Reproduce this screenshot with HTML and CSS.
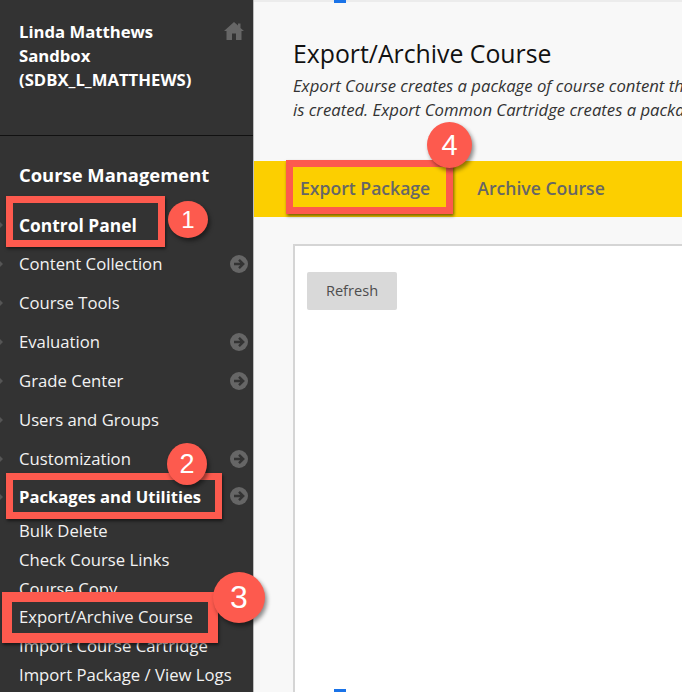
FILE: index.html
```html
<!DOCTYPE html>
<html lang="en">
<head>
<meta charset="utf-8">
<title>Export/Archive Course</title>
<link rel="stylesheet" href="styles.css">
</head>
<body>
<div class="app">
  <aside class="sidebar">
    <header class="course-head">
      <a class="course-name">Linda Matthews Sandbox (SDBX_L_MATTHEWS)</a>
      <svg class="home" viewBox="0 0 20 18" aria-hidden="true"><path d="M10 0 L14 3.6 V1.5 H16.5 V5.9 L20 9 H17.5 V18 H12 V11.5 H8 V18 H2.5 V9 H0 Z"/></svg>
    </header>
    <h2 class="section-title">Course Management</h2>
    <div class="panel-title caret">Control Panel</div>
    <ul class="nav">
      <li class="nav-row caret">Content Collection<svg class="go" viewBox="0 0 18 18" aria-hidden="true"><circle cx="9" cy="9" r="9"/><path d="M4 9 H12 M9 4.8 L13.2 9 L9 13.2"/></svg></li>
      <li class="nav-row caret">Course Tools</li>
      <li class="nav-row caret">Evaluation<svg class="go" viewBox="0 0 18 18" aria-hidden="true"><circle cx="9" cy="9" r="9"/><path d="M4 9 H12 M9 4.8 L13.2 9 L9 13.2"/></svg></li>
      <li class="nav-row caret">Grade Center<svg class="go" viewBox="0 0 18 18" aria-hidden="true"><circle cx="9" cy="9" r="9"/><path d="M4 9 H12 M9 4.8 L13.2 9 L9 13.2"/></svg></li>
      <li class="nav-row caret">Users and Groups</li>
      <li class="nav-row caret">Customization<svg class="go" viewBox="0 0 18 18" aria-hidden="true"><circle cx="9" cy="9" r="9"/><path d="M4 9 H12 M9 4.8 L13.2 9 L9 13.2"/></svg></li>
      <li class="nav-row nav-open caret">Packages and Utilities<svg class="go" viewBox="0 0 18 18" aria-hidden="true"><circle cx="9" cy="9" r="9"/><path d="M4 9 H12 M9 4.8 L13.2 9 L9 13.2"/></svg></li>
    </ul>
    <ul class="subnav">
      <li>Bulk Delete</li>
      <li>Check Course Links</li>
      <li>Course Copy</li>
      <li>Export/Archive Course</li>
      <li>Import Course Cartridge</li>
      <li>Import Package / View Logs</li>
    </ul>
  </aside>
  <main class="content">
    <div class="top-strip"><span class="marker"></span></div>
    <section class="page-head">
      <h1 class="page-title">Export/Archive Course</h1>
      <p class="page-desc"><span class="desc-line">Export Course creates a package of course content that</span><span class="desc-line">is created. Export Common Cartridge creates a package</span></p>
    </section>
    <nav class="action-bar">
      <a class="action">Export Package</a>
      <a class="action">Archive Course</a>
    </nav>
    <div class="box">
      <button class="refresh" type="button">Refresh</button>
    </div>
    <span class="marker marker-bottom"></span>
  </main>
  <div class="callout-box box-1"></div>
  <div class="callout-box box-2"></div>
  <div class="callout-box box-3"></div>
  <div class="callout-box box-4"></div>
  <div class="badge badge-1">1</div>
  <div class="badge badge-2">2</div>
  <div class="badge badge-3">3</div>
  <div class="badge badge-4">4</div>
</div>
</body>
</html>
```
FILE: styles.css
```css
* { box-sizing: border-box; }
html, body { margin: 0; padding: 0; background: #fff; }
.app {
  position: relative;
  width: 682px;
  height: 692px;
  overflow: hidden;
  display: flex;
  font-family: "Open Sans", "Liberation Sans", sans-serif;
}

/* Sidebar */
.sidebar {
  flex: 0 0 254px;
  height: 692px;
  background: #333;
  border-right: 1px solid #bdbdbd;
  color: #f2f2f2;
  overflow: hidden;
}
.course-head {
  height: 136px;
  padding: 20px 0 0 19px;
  border-bottom: 1px solid #111;
  display: flex;
  align-items: flex-start;
  position: relative;
}
.course-name {
  width: 185px;
  font-size: 16.7px;
  font-weight: 700;
  line-height: 24px;
  color: #fff;
}
.home { width: 20px; height: 18px; margin: 2px 0 0 20px; fill: #666; }
.section-title {
  margin: 26px 0 0;
  padding-left: 19px;
  font-size: 18.4px;
  line-height: 26px;
  font-weight: 700;
  color: #fff;
}
.panel-title {
  margin-top: 24px;
  padding-left: 19px;
  font-size: 17.4px;
  line-height: 26px;
  font-weight: 700;
  color: #fff;
}
.nav, .subnav { list-style: none; margin: 0; padding: 0; }
.nav { margin-top: 6px; }
.nav-row {
  height: 39px;
  padding: 0 5px 0 19px;
  display: flex;
  align-items: center;
  justify-content: space-between;
  font-size: 16.7px;
}
.nav-open { height: 38px; padding-bottom: 2px; font-size: 16.6px; font-weight: 700; color: #fff; }
.caret { position: relative; }
.caret::before {
  content: "";
  position: absolute;
  left: 0;
  top: 50%;
  margin-top: -3px;
  border-top: 3px solid transparent;
  border-bottom: 3px solid transparent;
  border-left: 3px solid #555;
}
.go { width: 18px; height: 18px; flex: none; }
.go circle { fill: #666; }
.go path { fill: none; stroke: #333; stroke-width: 2.4; }
.subnav { margin-top: 1px; }
.subnav li {
  height: 28.8px;
  line-height: 28.8px;
  padding-left: 19px;
  font-size: 16.7px;
  white-space: nowrap;
}

/* Content */
.content {
  flex: 1;
  min-width: 0;
  height: 692px;
  background: #f8f8f8;
  position: relative;
  overflow: hidden;
}
.top-strip { height: 3px; position: relative; background: linear-gradient(#ececec 2px, transparent 2px); }
.marker { position: absolute; left: 80px; top: 0; width: 12px; height: 3px; background: #1a73e8; }
.marker-bottom { top: auto; bottom: 0; }
.page-head { height: 158px; padding: 34px 0 0 39px; }
.page-title {
  margin: 0;
  font-size: 24.8px;
  line-height: 32px;
  font-weight: 400;
  color: #111;
  white-space: nowrap;
}
.page-desc {
  margin: 5px 0 0;
  font-size: 16.7px;
  line-height: 24px;
  font-style: italic;
  color: #333;
  white-space: nowrap;
}
.desc-line { display: block; }
.action-bar {
  height: 56px;
  padding: 0 0 2px 46px;
  background: #fccf00;
  display: flex;
  align-items: center;
  gap: 47px;
}
.action { font-size: 17.6px; font-weight: 600; color: #666; white-space: nowrap; }
.box {
  margin: 27px 0 0 39px;
  height: 460px;
  background: #fff;
  border-top: 2px solid #d5d5d5;
  border-left: 2px solid #d5d5d5;
  padding: 26px 0 0 12px;
}
.refresh {
  width: 90px;
  height: 38px;
  border: 0;
  border-radius: 2px;
  background: #d9d9d9;
  color: #4d4d4d;
  font-family: inherit;
  font-size: 14.6px;
  padding: 0 0 2px 0;
}

/* Annotations */
.callout-box {
  position: absolute;
  border: 7px solid #fd5a4e;
  box-shadow: 1px 2px 3px rgba(0, 0, 0, 0.55);
}
.box-1 { left: 6px; top: 196px; width: 159px; height: 51px; }
.box-2 { left: 6px; top: 473px; width: 216px; height: 46px; }
.box-3 { left: 2px; top: 592px; width: 216px; height: 51px; border-width: 10px; }
.box-4 { left: 286px; top: 160px; width: 167px; height: 54px; }
.badge {
  position: absolute;
  display: flex;
  align-items: center;
  justify-content: center;
  border-radius: 50%;
  background: #fd5a4e;
  color: #fff;
  font-family: "Liberation Sans", Arial, sans-serif;
  box-shadow: 2px 3px 4px rgba(0, 0, 0, 0.45);
}
.badge-1 { left: 168px; top: 201px; width: 40px; height: 37px; font-size: 24px; }
.badge-2 { left: 167px; top: 443px; width: 40px; height: 42px; font-size: 27px; }
.badge-3 { left: 213px; top: 572px; width: 52px; height: 51px; font-size: 32px; }
.badge-4 { left: 427px; top: 122px; width: 45px; height: 46px; font-size: 29px; }
```
